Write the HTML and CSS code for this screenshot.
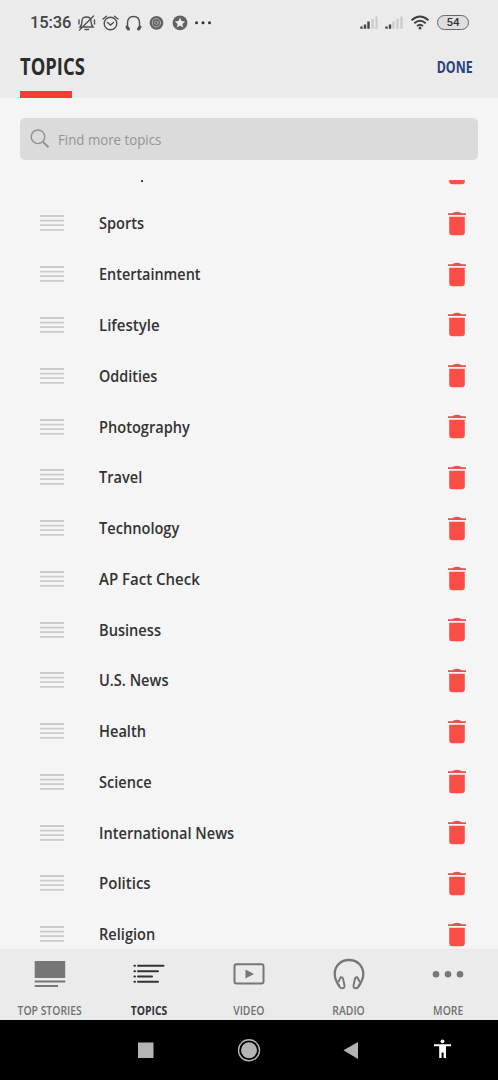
FILE: index.html
```html
<!DOCTYPE html>
<html lang="en">
<head>
<meta charset="utf-8">
<title>Topics</title>
<link rel="stylesheet" href="styles.css">
</head>
<body>
<svg class="defs" aria-hidden="true">
  <symbol id="grip" viewBox="0 0 24 18"><path d="M0 2H24M0 6.6H24M0 11.2H24M0 15.8H24" stroke="#cbcbcb" stroke-width="1.8"/></symbol>
  <symbol id="trash" viewBox="0 0 20 25"><path d="M1 2.2H5Q7 .7 10 .7T15 2.200H19V4H1Z" fill="#e2564f"/><path d="M2.2 5.8H17.8V21.8Q17.8 24.2 15.4 24.2H4.6Q2.2 24.2 2.2 21.8Z" fill="#fa4e46"/></symbol>
</svg>
<div class="phone">
  <header class="header">
    <div class="status">
      <span class="clock">15:36</span>
      <svg class="status-left" viewBox="76 12 140 22" fill="none" stroke="#505050" stroke-width="1.4" stroke-linecap="round">
        <path d="M80 27Q82 25 82 21Q82 17 86.500 17Q91 17 91 21Q91 25 93 27ZM79.500 30L93.500 16M85 29.500H88.500M79 20V24M94.500 20V24"/>
        <circle cx="110.500" cy="23.500" r="6.300"/><path d="M107.500 22.500L110.500 25L113.500 22.500M103 19L106.500 16.300M118 19L114.500 16.300"/>
        <path d="M127.500 26V23Q127.500 16.500 133.500 16.500Q139.500 16.500 139.500 23V26"/><path d="M127 27L128.500 29M140 27L138.500 29" stroke-width="3"/>
        <circle cx="156.500" cy="22.800" r="6.900" fill="#626262" stroke="none"/><circle cx="156.500" cy="22.800" r="4.100" stroke="#b5b5b5" stroke-width=".9"/><circle cx="156.500" cy="22.800" r="1.700" stroke="#b5b5b5" stroke-width=".9"/>
        <circle cx="180" cy="22.800" r="7.400" fill="#626262" stroke="none"/><path d="M180 17.800L181.500 21.100L185 21.500L182.400 23.900L183.100 27.400L180 25.600L176.900 27.400L177.600 23.900L175 21.500L178.500 21.100Z" fill="#ededed" stroke="none"/>
        <g fill="#303030" stroke="none"><circle cx="196.500" cy="22.800" r="1.500"/><circle cx="203" cy="22.800" r="1.500"/><circle cx="209.500" cy="22.800" r="1.500"/></g>
      </svg>
      <svg class="status-right" viewBox="358 12 74 22" fill="none">
        <g stroke-width="2.400"><path d="M361.500 28.700V26.500M365 28.700V24.500M368.500 28.700V21.500" stroke="#444"/><path d="M372.500 28.700V19M376.500 28.700V16.500" stroke="#ccc"/>
        <path d="M386.500 28.700V26.500M390 28.700V24.500" stroke="#444"/><path d="M393.500 28.700V21.500M397.500 28.700V19M401.500 28.700V16.500" stroke="#ccc"/></g>
        <path d="M411.500 20.300Q420 12.700 428.500 20.300M414.300 23.200Q420 18.200 425.700 23.200M417 26Q420 23.500 423 26" stroke="#404040" stroke-width="1.900"/><circle cx="420" cy="28" r="1.500" fill="#404040"/>
      </svg>
      <span class="battery">54</span>
    </div>
    <h1 class="title"><span>TOPICS</span></h1>
    <a class="done">DONE</a>
    <div class="underline"></div>
  </header>
  <div class="search">
    <svg viewBox="0 0 20 20" fill="none" stroke="#929292"><circle cx="8" cy="7.800" r="6.800" stroke-width="1.400"/><path d="M13 13L18.500 18.300" stroke-width="2"/></svg>
    <span>Find more topics</span>
  </div>
  <main class="list">
    <div class="row clipped"><i></i><svg class="trash"><use href="#trash"/></svg></div>
    <div class="row"><svg class="grip"><use href="#grip"/></svg><span>Sports</span><svg class="trash"><use href="#trash"/></svg></div>
    <div class="row"><svg class="grip"><use href="#grip"/></svg><span class="narrow">Entertainment</span><svg class="trash"><use href="#trash"/></svg></div>
    <div class="row"><svg class="grip"><use href="#grip"/></svg><span class="wide">Lifestyle</span><svg class="trash"><use href="#trash"/></svg></div>
    <div class="row"><svg class="grip"><use href="#grip"/></svg><span class="narrow">Oddities</span><svg class="trash"><use href="#trash"/></svg></div>
    <div class="row"><svg class="grip"><use href="#grip"/></svg><span>Photography</span><svg class="trash"><use href="#trash"/></svg></div>
    <div class="row"><svg class="grip"><use href="#grip"/></svg><span>Travel</span><svg class="trash"><use href="#trash"/></svg></div>
    <div class="row"><svg class="grip"><use href="#grip"/></svg><span>Technology</span><svg class="trash"><use href="#trash"/></svg></div>
    <div class="row"><svg class="grip"><use href="#grip"/></svg><span class="wide">AP Fact Check</span><svg class="trash"><use href="#trash"/></svg></div>
    <div class="row"><svg class="grip"><use href="#grip"/></svg><span>Business</span><svg class="trash"><use href="#trash"/></svg></div>
    <div class="row"><svg class="grip"><use href="#grip"/></svg><span>U.S. News</span><svg class="trash"><use href="#trash"/></svg></div>
    <div class="row"><svg class="grip"><use href="#grip"/></svg><span>Health</span><svg class="trash"><use href="#trash"/></svg></div>
    <div class="row"><svg class="grip"><use href="#grip"/></svg><span>Science</span><svg class="trash"><use href="#trash"/></svg></div>
    <div class="row"><svg class="grip"><use href="#grip"/></svg><span>International News</span><svg class="trash"><use href="#trash"/></svg></div>
    <div class="row"><svg class="grip"><use href="#grip"/></svg><span class="wide">Politics</span><svg class="trash"><use href="#trash"/></svg></div>
    <div class="row"><svg class="grip"><use href="#grip"/></svg><span>Religion</span><svg class="trash"><use href="#trash"/></svg></div>
  </main>
  <nav class="tabs">
    <a class="tab"><svg viewBox="0 0 36 36"><path d="M2.700 5H33.200V22H2.700ZM2.700 24.500H33.200V26.500H2.700ZM2.700 29H26V31H2.700Z" fill="#777"/></svg><span>TOP STORIES</span></a>
    <a class="tab active"><svg viewBox="0 0 36 36" stroke="#333" stroke-width="2" stroke-linecap="round" fill="none"><path d="M3.400 9.700H4M7 9.700H32.500M3.400 15.200H4M7 15.200H27M3.400 20.500H4M7 20.500H21M3.400 25.700H4M7 25.700H27"/></svg><span>TOPICS</span></a>
    <a class="tab"><svg viewBox="0 0 36 36" fill="none" stroke="#777" stroke-width="2"><rect x="3.500" y="8.300" width="29" height="19.200" rx="2"/><path d="M14.500 13.500L23 18L14.500 22.500Z" fill="#777" stroke="none"/></svg><span>VIDEO</span></a>
    <a class="tab"><svg viewBox="0 0 36 36" fill="none" stroke="#777" stroke-width="2.300" stroke-linejoin="round"><path d="M8.500 30.500C4 24 3.700 20 3.700 18C3.700 9.500 10 4 18 4S32.300 9.500 32.300 18C32.300 20 32 24 27.500 30.500"/><path d="M7.300 26L9.600 21.300Q12 21 12.200 23.500L13.500 29.500Q13.800 32.300 11 32.300Q8.800 32.500 7.300 28M28.700 26L26.400 21.300Q24 21 23.800 23.500L22.500 29.500Q22.200 32.300 25 32.300Q27.200 32.500 28.700 28" stroke-width="1.900"/></svg><span>RADIO</span></a>
    <a class="tab"><svg viewBox="0 0 36 36" fill="#777"><circle cx="6" cy="18.300" r="3.300"/><circle cx="18" cy="18.300" r="3.300"/><circle cx="30" cy="18.300" r="3.300"/></svg><span>MORE</span></a>
  </nav>
  <footer class="system">
    <svg viewBox="0 0 498 60">
      <rect x="138" y="22.500" width="15.500" height="15.500" fill="#b4b4b4"/>
      <circle cx="249" cy="30.300" r="10.500" fill="none" stroke="#b4b4b4" stroke-width="1.400"/><circle cx="249" cy="30.300" r="8" fill="#b4b4b4"/>
      <path d="M343.500 30.300L358 22V39Z" fill="#b4b4b4"/>
      <circle cx="442.500" cy="21.300" r="1.900" fill="#fff"/><path d="M434 24.200H451V26.300H446V38H443.600V32.500H441.600V38H439.200V26.300H434Z" fill="#fff"/>
    </svg>
  </footer>
</div>
</body>
</html>
```
FILE: styles.css
```css
* { box-sizing: border-box; }
body { margin: 0; font-family: "Open Sans", "Noto Sans", sans-serif; background: #f5f5f5; }
.defs { position: absolute; width: 0; height: 0; }
.phone { width: 498px; height: 1080px; display: flex; flex-direction: column; overflow: hidden; background: #f5f5f5; }
.header { height: 98px; flex: none; background: #ebebeb; display: grid; grid-template: 44px 47px 7px / 1fr auto; padding: 0 25px 0 20px; }
.status { grid-column: 1 / 3; display: flex; align-items: flex-start; padding-top: 12px; margin-right: -25px; }
.clock { font: 500 16.5px/22px Roboto, sans-serif; letter-spacing: -.1px; color: #444; width: 46px; margin: 0 0 0 10px; white-space: nowrap; }
.status-left { width: 140px; height: 22px; }
.status-right { width: 74px; height: 22px; margin-left: 142px; }
.battery { width: 32px; height: 15px; margin: 3px 0 0 5px; border: 1.5px solid #666; border-radius: 8px; background: #dedede; color: #333; font: 500 11.5px/13px Roboto, sans-serif; text-align: center; }
.title { margin: 0; font-size: 23px; line-height: 45px; font-weight: 700; color: #2c2c2c; }
.title span { display: inline-block; transform: scaleX(.8); transform-origin: left; }
.done { font-size: 16px; line-height: 46px; font-weight: 700; color: #28407e; transform: scaleX(.77); transform-origin: right; }
.underline { width: 52px; height: 7px; background: #f23d38; }
.search { flex: none; height: 42px; margin: 20px 20px 20px; background: #dbdbdb; border-radius: 5px; display: flex; align-items: center; padding-left: 10px; }
.search svg { width: 20px; height: 20px; margin-right: 8px; }
.search span { font-size: 15px; color: #949494; transform: scaleX(.885); transform-origin: left; font-weight: 500; white-space: nowrap; }
.list { flex: none; height: 769px; overflow: hidden; }
.row { height: 50.77px; display: flex; align-items: center; padding: 0 31px 0 40px; }
.row:first-child { margin-top: -32.7px; }
.row span { flex: 1; margin: -1px 0 0 35px; font-size: 16.5px; font-weight: 600; color: #333; white-space: nowrap; transform: scaleX(.885); transform-origin: left; }
.row .wide { transform: scaleX(.91); }
.row .narrow { transform: scaleX(.873); }
.grip { width: 24px; height: 18px; flex: none; }
.trash { width: 20px; height: 25px; flex: none; }
.clipped { justify-content: space-between; }
.clipped i { width: 2px; height: 2px; background: #444; margin: 17px 0 0 100.5px; }
.tabs { flex: none; height: 71px; background: #ebebeb; display: flex; }
.tab { width: 99.6px; display: flex; flex-direction: column; align-items: center; padding-top: 7px; color: #707070; }
.tab svg { width: 36px; height: 36px; }
.tab span { margin-top: 10px; font-size: 12.5px; line-height: 17px; font-weight: 600; white-space: nowrap; transform: scaleX(.83); }
.tab.active { color: #333; }
.tab.active span { font-weight: 700; transform: scaleX(.83); }
.system { height: 60px; flex: none; background: #000; }
.system svg { display: block; width: 498px; height: 60px; }
```
